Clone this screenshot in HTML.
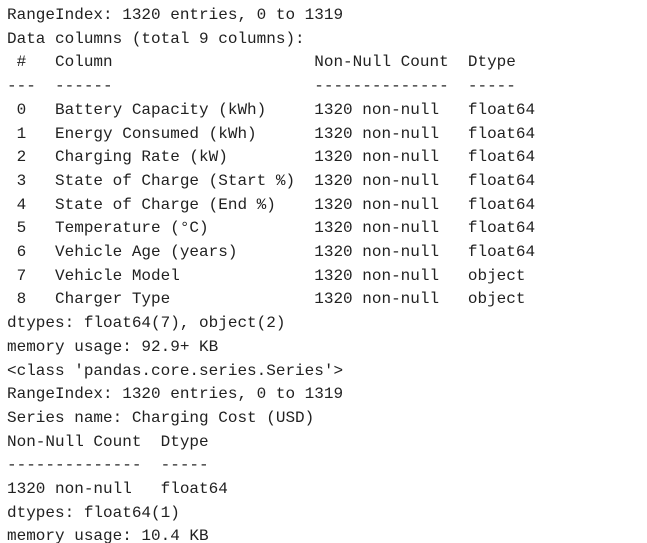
<!DOCTYPE html>
<html><head><meta charset="utf-8"><style>
html,body{margin:0;padding:0;background:#fff;width:647px;height:543px;overflow:hidden}
pre{margin:0;padding:4px 0 0 7px;font-family:"Liberation Mono",monospace;font-size:16px;line-height:23.7px;color:#212121;white-space:pre}
</style></head><body><pre>RangeIndex: 1320 entries, 0 to 1319
Data columns (total 9 columns):
 #   Column                     Non-Null Count  Dtype  
---  ------                     --------------  -----  
 0   Battery Capacity (kWh)     1320 non-null   float64
 1   Energy Consumed (kWh)      1320 non-null   float64
 2   Charging Rate (kW)         1320 non-null   float64
 3   State of Charge (Start %)  1320 non-null   float64
 4   State of Charge (End %)    1320 non-null   float64
 5   Temperature (°C)           1320 non-null   float64
 6   Vehicle Age (years)        1320 non-null   float64
 7   Vehicle Model              1320 non-null   object 
 8   Charger Type               1320 non-null   object 
dtypes: float64(7), object(2)
memory usage: 92.9+ KB
&lt;class 'pandas.core.series.Series'&gt;
RangeIndex: 1320 entries, 0 to 1319
Series name: Charging Cost (USD)
Non-Null Count  Dtype  
--------------  -----  
1320 non-null   float64
dtypes: float64(1)
memory usage: 10.4 KB</pre></body></html>
